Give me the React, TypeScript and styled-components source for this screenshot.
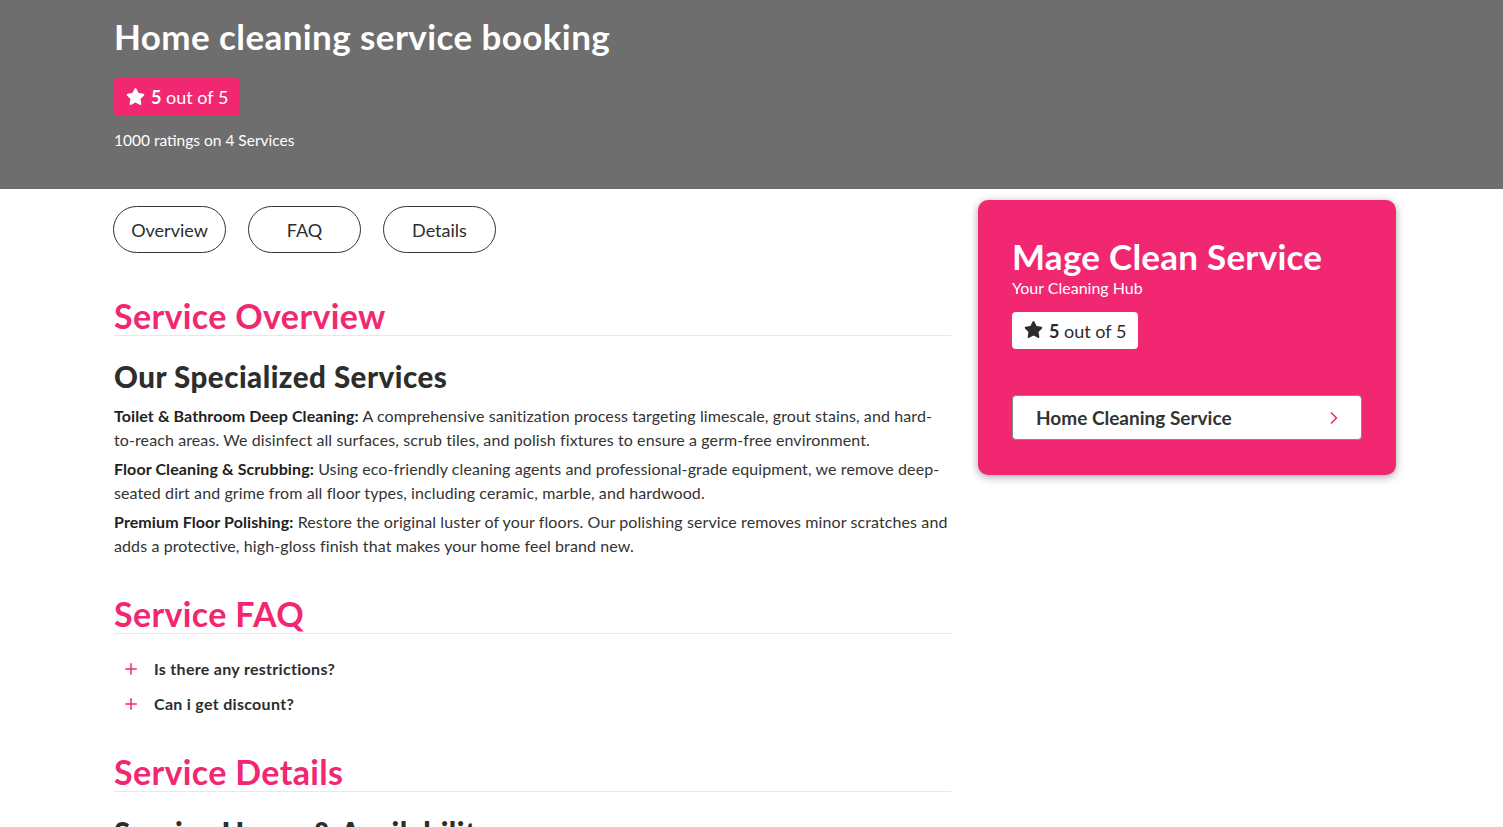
import { FC } from "react"
import styled, { createGlobalStyle } from "styled-components"
import { FaStar } from "react-icons/fa"
import { FiChevronRight, FiPlus } from "react-icons/fi"

const PINK = "#f22771"
const DARK = "#2d2d2d"

const GlobalStyle = createGlobalStyle`
  * {
    box-sizing: border-box;
  }
  body {
    margin: 0;
    font-family: Lato, "Noto Sans", sans-serif;
    color: ${DARK};
    background: #fff;
    overflow: hidden;
  }
`

const Hero = styled.header`
  background: #6e6e6e;
  color: #fff;
  padding: 17px 0 39px 114px;
`

const HeroTitle = styled.h1`
  margin: 0;
  font-size: 35px;
  line-height: 38px;
  font-weight: 700;
  letter-spacing: 0.4px;
`

const RatingBadge = styled.div<{ $light?: boolean }>`
  display: inline-flex;
  align-items: center;
  gap: 6px;
  height: ${(p) => (p.$light ? "37px" : "38px")};
  padding: 0 12px;
  border-radius: 4px;
  font-size: 18px;
  background: ${(p) => (p.$light ? "#fff" : PINK)};
  color: ${(p) => (p.$light ? DARK : "#fff")};

  b {
    font-weight: 700;
  }
  svg {
    font-size: 19px;
    margin-top: -2px;
  }
`

const HeroBadgeRow = styled.div`
  margin-top: 23px;
`

const HeroMeta = styled.p`
  margin: 14px 0 0;
  font-size: 15.5px;
  line-height: 20px;
`

const Layout = styled.div`
  display: grid;
  grid-template-columns: 837px 418px;
  column-gap: 27px;
  padding: 0 0 0 114px;
  align-items: start;
`

const Main = styled.main`
  padding-top: 17px;
`

const Tabs = styled.nav`
  display: flex;
  gap: 22px;
  margin-left: -1px;
`

const Tab = styled.button`
  width: 113px;
  height: 47px;
  border: 1px solid #333;
  border-radius: 24px;
  background: #fff;
  font-family: inherit;
  font-size: 18px;
  color: ${DARK};
  cursor: pointer;
`

const SectionTitle = styled.h2<{ $gap: number }>`
  margin: ${(p) => p.$gap}px 0 0;
  font-size: 34px;
  line-height: 38px;
  font-weight: 700;
  letter-spacing: 0.35px;
  color: ${PINK};
  border-bottom: 1px solid #e8e8e8;
`

const SubTitle = styled.h3`
  margin: 24px 0 10px;
  font-size: 29.5px;
  line-height: 34px;
  font-weight: 900;
  letter-spacing: 0.5px;
  color: ${DARK};
`

const Paragraph = styled.p`
  margin: 0 0 5px;
  font-size: 16px;
  line-height: 24px;
  letter-spacing: 0.1px;
  color: #333;

  strong {
    font-weight: 700;
    color: #222;
  }
`

const FaqList = styled.ul`
  list-style: none;
  margin: 17px 0 0;
  padding: 0 0 0 8px;
`

const FaqItem = styled.li`
  display: flex;
  align-items: center;
  gap: 14px;
  height: 35px;
  font-size: 16px;
  font-weight: 700;
  letter-spacing: 0.3px;
  color: ${DARK};

  svg {
    color: ${PINK};
    font-size: 18px;
  }
`

const Sidebar = styled.aside`
  padding-top: 11px;
`

const ProviderCard = styled.div`
  background: ${PINK};
  border-radius: 10px;
  padding: 37px 34px 35px;
  color: #fff;
  box-shadow: 0 2px 8px rgba(0, 0, 0, 0.35);
`

const ProviderName = styled.h2`
  margin: 0;
  font-size: 35px;
  line-height: 38px;
  font-weight: 700;
  letter-spacing: 0.25px;
`

const ProviderTag = styled.p`
  margin: 3px 0 14px;
  font-size: 16px;
  line-height: 20px;
`

const ServiceButton = styled.button`
  margin-top: 46px;
  width: 100%;
  height: 45px;
  display: flex;
  align-items: center;
  justify-content: space-between;
  padding: 0 17px 0 23px;
  background: #fff;
  border: 1px solid #888;
  border-radius: 4px;
  font-family: inherit;
  font-size: 19px;
  font-weight: 700;
  color: #333;
  cursor: pointer;

  svg {
    color: ${PINK};
    font-size: 20px;
  }
`

const services = [
  {
    title: "Toilet & Bathroom Deep Cleaning:",
    text: "A comprehensive sanitization process targeting limescale, grout stains, and hard-to-reach areas. We disinfect all surfaces, scrub tiles, and polish fixtures to ensure a germ-free environment.",
  },
  {
    title: "Floor Cleaning & Scrubbing:",
    text: "Using eco-friendly cleaning agents and professional-grade equipment, we remove deep-seated dirt and grime from all floor types, including ceramic, marble, and hardwood.",
  },
  {
    title: "Premium Floor Polishing:",
    text: "Restore the original luster of your floors. Our polishing service removes minor scratches and adds a protective, high-gloss finish that makes your home feel brand new.",
  },
]

const faqs = ["Is there any restrictions?", "Can i get discount?"]

const Rating: FC<{ light?: boolean }> = ({ light }) => (
  <RatingBadge $light={light}>
    <FaStar />
    <span>
      <b>5</b> out of 5
    </span>
  </RatingBadge>
)

const App: FC = () => {
  return (
    <>
      <GlobalStyle />
      <Hero>
        <HeroTitle>Home cleaning service booking</HeroTitle>
        <HeroBadgeRow>
          <Rating />
        </HeroBadgeRow>
        <HeroMeta>1000 ratings on 4 Services</HeroMeta>
      </Hero>
      <Layout>
        <Main>
          <Tabs>
            <Tab>Overview</Tab>
            <Tab>FAQ</Tab>
            <Tab>Details</Tab>
          </Tabs>

          <SectionTitle $gap={44}>Service Overview</SectionTitle>
          <SubTitle>Our Specialized Services</SubTitle>
          {services.map((s) => (
            <Paragraph key={s.title}>
              <strong>{s.title}</strong> {s.text}
            </Paragraph>
          ))}

          <SectionTitle $gap={37}>Service FAQ</SectionTitle>
          <FaqList>
            {faqs.map((q) => (
              <FaqItem key={q}>
                <FiPlus />
                {q}
              </FaqItem>
            ))}
          </FaqList>

          <SectionTitle $gap={32}>Service Details</SectionTitle>
          <SubTitle>Service Hours &amp; Availability</SubTitle>
        </Main>
        <Sidebar>
          <ProviderCard>
            <ProviderName>Mage Clean Service</ProviderName>
            <ProviderTag>Your Cleaning Hub</ProviderTag>
            <Rating light />
            <ServiceButton>
              Home Cleaning Service
              <FiChevronRight />
            </ServiceButton>
          </ProviderCard>
        </Sidebar>
      </Layout>
    </>
  )
}

export default App
